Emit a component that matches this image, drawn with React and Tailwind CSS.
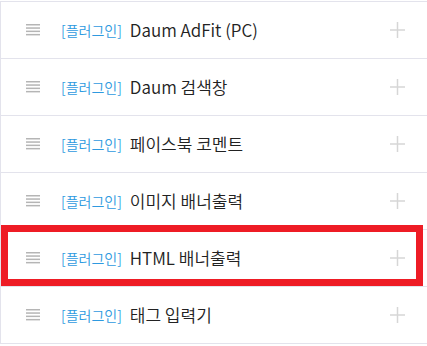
const items = [
  "Daum AdFit (PC)",
  "Daum 검색창",
  "페이스북 코멘트",
  "이미지 배너출력",
  "HTML 배너출력",
  "태그 입력기",
];

function DragHandle() {
  return (
    <svg width="14" height="12" viewBox="0 0 14 12" className="shrink-0">
      <rect x="0" y="0" width="14" height="1.5" fill="#b5b5b5" />
      <rect x="0" y="3.3" width="14" height="1.5" fill="#b5b5b5" />
      <rect x="0" y="6.6" width="14" height="1.5" fill="#b5b5b5" />
      <rect x="0" y="9.9" width="14" height="1.5" fill="#b5b5b5" />
    </svg>
  );
}

function PlusIcon() {
  return (
    <svg width="15" height="16" viewBox="0 0 15 16" className="shrink-0">
      <rect x="0" y="7.25" width="15" height="1.5" fill="#d6d6d6" />
      <rect x="6.75" y="0" width="1.5" height="16" fill="#d6d6d6" />
    </svg>
  );
}

function Row({ title, highlight }) {
  return (
    <div className="relative h-[57px] border-b border-[#e3e3ec] flex items-center pl-[25px] pr-[22px]">
      <DragHandle />
      <span className="ml-[21px] text-[14px] font-[350] text-[#2e9ae0]">[플러그인]</span>
      <span className="ml-[8px] text-[17px] font-[350] text-[#222]">{title}</span>
      <div className="ml-auto">
        <PlusIcon />
      </div>
      {highlight && (
        <div className="absolute left-0 top-[-5px] w-[422px] h-[61px] border-[7px] border-[#ee1c25] pointer-events-none" />
      )}
    </div>
  );
}

export default function App() {
  return (
    <div
      className="w-[427px] h-[346px] bg-white overflow-hidden"
      style={{ fontFamily: '"Noto Sans CJK KR", "Noto Sans", sans-serif' }}
    >
      <div className="mt-px border-t border-l border-[#e3e3ec]">
        {items.map((t, i) => (
          <Row key={t} title={t} highlight={i === 4} />
        ))}
      </div>
    </div>
  );
}
